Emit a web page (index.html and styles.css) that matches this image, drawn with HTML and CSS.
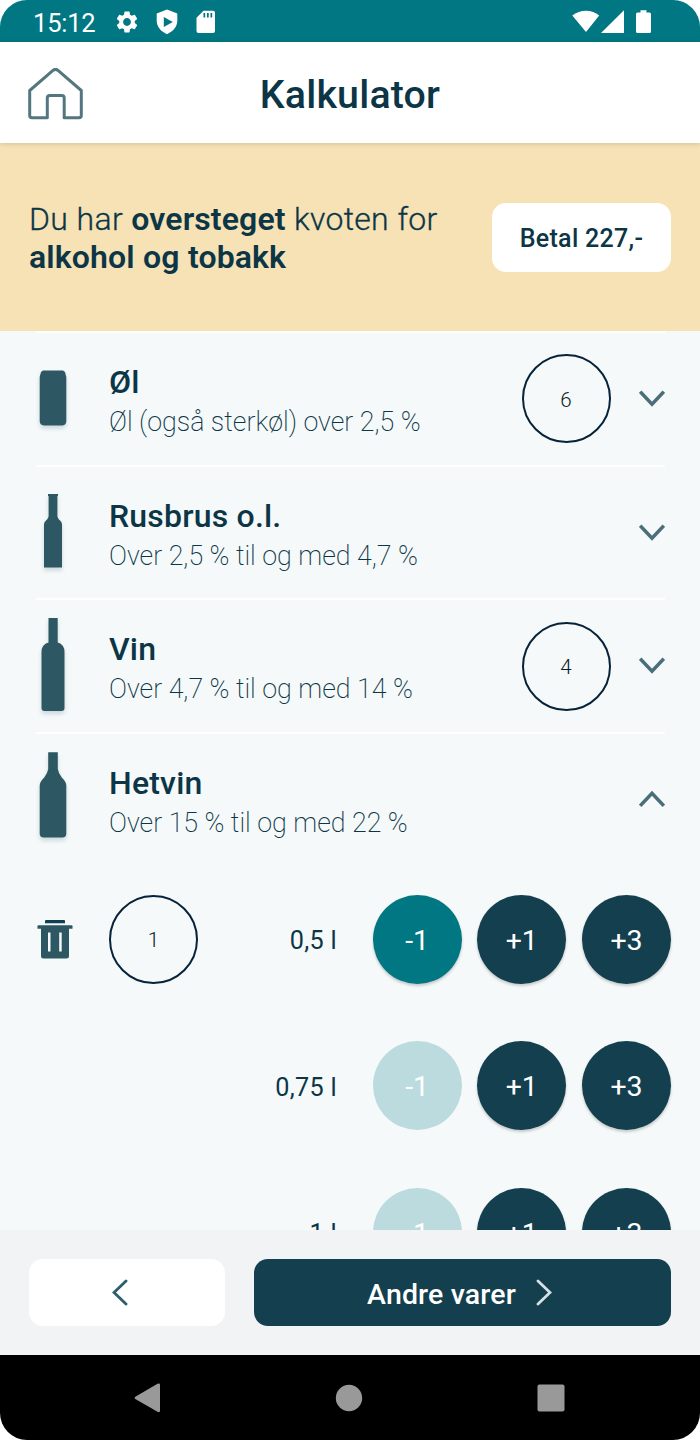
FILE: index.html
```html
<!DOCTYPE html>
<html lang="no">
<head>
    <meta charset="UTF-8">
    <meta name="viewport" content="width=device-width, initial-scale=1.0">
    <title>Kalkulator</title>
    <link rel="stylesheet" href="styles.css">
</head>
<body>
    <div class="phone">
        <div class="status-bar">
            <span class="time">15:12</span>
            <svg class="status-gear" width="26" height="26" viewBox="0 0 24 24"><path fill="#fff" d="M19.14 12.94c.04-.3.06-.61.06-.94 0-.32-.02-.64-.07-.94l2.03-1.58c.18-.14.23-.41.12-.61l-1.92-3.32c-.12-.22-.37-.29-.59-.22l-2.39.96c-.5-.38-1.03-.7-1.62-.94l-.36-2.54c-.04-.24-.24-.41-.48-.41h-3.84c-.24 0-.43.17-.47.41l-.36 2.54c-.59.24-1.13.57-1.62.94l-2.39-.96c-.22-.08-.47 0-.59.22L2.74 8.87c-.12.21-.08.47.12.61l2.03 1.58c-.05.3-.09.63-.09.94s.02.64.07.94l-2.03 1.58c-.18.14-.23.41-.12.61l1.92 3.32c.12.22.37.29.59.22l2.39-.96c.5.38 1.03.7 1.62.94l.36 2.54c.05.24.24.41.48.41h3.84c.24 0 .44-.17.47-.41l.36-2.54c.59-.24 1.13-.56 1.62-.94l2.39.96c.22.08.47 0 .59-.22l1.92-3.32c.12-.22.07-.47-.12-.61l-2.01-1.58zM12 15.6c-1.98 0-3.6-1.62-3.6-3.6s1.62-3.6 3.6-3.6 3.6 1.62 3.6 3.6-1.62 3.6-3.6 3.6z"/></svg>
            <svg class="status-shield" width="22" height="26" viewBox="0 0 22 26"><path fill="#fff" fill-rule="evenodd" d="M11 .5 21.3 4.6v7.2c0 6-4.4 10.9-10.3 13.4C5.100 22.700.7 17.800.7 11.800V4.600zM7.800 8v10l9-5z"/></svg>
            <svg class="status-card" width="20" height="24" viewBox="0 0 20 24"><path fill="#fff" fill-rule="evenodd" d="M7.500.8H17a2 2 0 0 1 2 2V21a2 2 0 0 1-2 2H2.500a2 2 0 0 1-2-2V7.800zM7.500 3v4.500h1.700V3zM11 3v4.500h1.700V3zM14.500 3v4.500h1.700V3z"/></svg>
            <div class="status-right">
                <svg width="28" height="24" viewBox="0 0 28 24"><path fill="#fff" d="M.3 5.600C8-.9 20-.9 27.200 5.600L14 22z"/></svg>
                <svg width="23" height="24" viewBox="0 0 23 24"><path fill="#fff" d="M23 .3V23H0z"/></svg>
                <svg class="battery" width="15" height="24" viewBox="0 0 15 24"><path fill="#fff" d="M4.500.2h6v2.300h3a1.500 1.500 0 0 1 1.500 1.500v17.500a1.500 1.500 0 0 1-1.500 1.500h-12A1.500 1.500 0 0 1 0 21.500V4a1.500 1.500 0 0 1 1.500-1.500h3z"/></svg>
            </div>
        </div>

        <div class="header">
            <svg class="home" width="55" height="52" viewBox="0 0 55 52"><path fill="none" stroke="#54777f" stroke-width="3" stroke-linejoin="round" d="M1.700 22.500 25.300 2.200q2.200-1.600 4.400 0L53.300 22.500V47.500q0 2.300-2.300 2.300H36.200V30q0-2.500-2.500-2.500H21.800q-2.500 0-2.500 2.500V49.800H4q-2.300 0-2.300-2.300z"/></svg>
            <h1>Kalkulator</h1>
        </div>

        <div class="banner">
            <p>Du har <b>oversteget</b> kvoten for<br><b>alkohol og tobakk</b></p>
            <button class="pay-btn">Betal 227,-</button>
        </div>

        <div class="list">
            <div class="item">
                <div class="item-icon can">
                    <svg width="28" height="56" viewBox="0 0 28 56"><path fill="#2d5762" d="M4 .5h20l2 1.500L27.300 7v44q0 4-4 4.500H5Q.7 55 .7 51V7L2 2z"/></svg>
                </div>
                <div class="item-text">
                    <h2>Øl</h2>
                    <p>Øl (også sterkøl) over 2,5 %</p>
                </div>
                <div class="count">6</div>
                <svg class="chevron" width="26" height="18" viewBox="0 0 26 18"><path d="M1.200 1.700 13 14.200 24.800 1.700"/></svg>
            </div>
            <div class="item">
                <div class="item-icon bottle">
                    <svg width="20" height="74" viewBox="0 0 20 74"><path fill="#2d5762" d="M5 0h10v2h-.600v20.500q.6 2.300 2.600 4 2 1.500 2 4V73.500H1V30.500q0-2.500 2-4 2-1.700 2.600-4V2H5z"/></svg>
                </div>
                <div class="item-text">
                    <h2>Rusbrus o.l.</h2>
                    <p>Over 2,5 % til og med 4,7 %</p>
                </div>
                <svg class="chevron" width="26" height="18" viewBox="0 0 26 18"><path d="M1.200 1.700 13 14.200 24.800 1.700"/></svg>
            </div>
            <div class="item">
                <div class="item-icon bottle">
                    <svg width="24" height="93" viewBox="0 0 24 93"><path fill="#2d5762" d="M7.500 0h9.200v24.500Q23.500 26.500 23.500 34v56q0 3-3 3h-17q-3 0-3-3V34q0-7.500 7-9.500z"/></svg>
                </div>
                <div class="item-text">
                    <h2>Vin</h2>
                    <p>Over 4,7 % til og med 14 %</p>
                </div>
                <div class="count">4</div>
                <svg class="chevron" width="26" height="18" viewBox="0 0 26 18"><path d="M1.200 1.700 13 14.200 24.800 1.700"/></svg>
            </div>
            <div class="item">
                <div class="item-icon fortified">
                    <svg width="28" height="86" viewBox="0 0 28 86"><path fill="#2d5762" d="M9.200.3h9.600V17q.7 4.500 4 8.500 4.500 4.500 4.500 8V81.500q0 4-4 4H4.700q-4 0-4-4v-48q0-3.500 4.500-8 3.300-4 4-8.500z"/></svg>
                </div>
                <div class="item-text">
                    <h2>Hetvin</h2>
                    <p>Over 15 % til og med 22 %</p>
                </div>
                <svg class="chevron" width="26" height="18" viewBox="0 0 26 18"><path d="M1.200 14.800 13 2.300 24.800 14.800"/></svg>
            </div>

            <div class="size-row">
                <svg class="trash" width="36" height="39" viewBox="0 0 36 39"><path fill="#2d5762" fill-rule="evenodd" d="M4 8h28v28q0 2.500-2.500 2.500h-23Q4 38.500 4 36zM11 12.500v19h2.500v-19zM22.200 12.500v19h2.500v-19z"/><path fill="#2d5762" d="M1.500 5.200h33q1 0 1 1V8.700H.5V6.200q0-1 1-1z"/><path fill="#123f4e" d="M9 0h18q1 0 1 1v2.300H8V1q0-1 1-1z"/></svg>
                <div class="count">1</div>
                <span class="size">0,5 l</span>
                <button class="round minus">-1</button>
                <button class="round">+1</button>
                <button class="round">+3</button>
            </div>
            <div class="size-row">
                <span class="size">0,75 l</span>
                <button class="round disabled">-1</button>
                <button class="round">+1</button>
                <button class="round">+3</button>
            </div>
            <div class="size-row">
                <span class="size">1 l</span>
                <button class="round disabled">-1</button>
                <button class="round">+1</button>
                <button class="round">+3</button>
            </div>
        </div>

        <div class="footer">
            <button class="back-btn">
                <svg width="16" height="27" viewBox="0 0 16 27"><path fill="none" stroke="#2d5f6c" stroke-width="2.900" stroke-linecap="round" d="M14 2 2 13.500 14 25"/></svg>
            </button>
            <button class="next-btn">
                <span>Andre varer</span>
                <svg width="16" height="27" viewBox="0 0 16 27"><path fill="none" stroke="#d8dfe2" stroke-width="2.800" stroke-linecap="round" d="M2 2 14 13.500 2 25"/></svg>
            </button>
        </div>

        <div class="nav-bar">
            <svg width="28" height="30" viewBox="0 0 28 30"><path fill="#999" d="M1.300 13.800 23.500.8q2.500-1 2.500 1v26q0 2-2.500 1L1.300 16q-1.300-1.100 0-2.200z"/></svg>
            <svg width="28" height="28" viewBox="0 0 28 28"><circle cx="14" cy="14" r="13.200" fill="#999"/></svg>
            <svg width="28" height="28" viewBox="0 0 28 28"><rect x=".5" y=".5" width="27" height="27" rx="2" fill="#999"/></svg>
        </div>
    </div>
</body>
</html>
```
FILE: styles.css
```css
* {
    box-sizing: border-box;
}
body {
    margin: 0;
    background-color: #fff;
    font-family: Roboto, "Liberation Sans", sans-serif;
    color: #0c3646;
}
h1, h2, p {
    margin: 0;
}
button {
    border: none;
    padding: 0;
    font-family: inherit;
    color: inherit;
}
svg {
    display: block;
    flex: none;
}
.phone {
    width: 700px;
    height: 1440px;
    display: flex;
    flex-direction: column;
    border-radius: 27px;
    overflow: hidden;
    background-color: #f5f9fa;
}
.status-bar {
    height: 42px;
    flex: none;
    display: flex;
    align-items: center;
    padding: 1px 49px 0 33px;
    background-color: #007782;
    color: #fff;
}
.time {
    width: 63px;
    padding-top: 2px;
    font-size: 25.500px;
    letter-spacing: -0.2px;
    white-space: nowrap;
}
.status-gear {
    margin-left: 18px;
}
.status-shield {
    margin-left: 16px;
}
.status-card {
    margin-left: 18px;
}
.status-right {
    margin-left: auto;
    display: flex;
    gap: 1px;
}
.battery {
    margin-left: 11px;
}
.header {
    height: 101px;
    flex: none;
    display: flex;
    align-items: center;
    padding: 2px 28px 0;
    background-color: #fff;
    box-shadow: 0 1px 5px rgba(0,0,0,0.15);
    z-index: 1;
}
.header h1 {
    flex: 1;
    margin-right: 55px;
    padding-top: 2px;
    text-align: center;
    font-size: 39.300px;
    font-weight: 500;
    letter-spacing: 0.2px;
}
.banner {
    height: 188px;
    flex: none;
    display: flex;
    justify-content: space-between;
    align-items: flex-start;
    padding: 57px 29px 0 29px;
    background-color: #f6e2b5;
}
.banner p {
    font-size: 32px;
    line-height: 38px;
    font-weight: 300;
    letter-spacing: 0.3px;
    word-spacing: 0.3px;
    white-space: nowrap;
    -webkit-text-stroke: 0.3px #0c3646;
}
.banner b {
    font-weight: 600;
    letter-spacing: 0.12px;
    -webkit-text-stroke: 0;
}
.pay-btn {
    width: 179px;
    height: 69px;
    margin-top: 3px;
    padding-top: 2px;
    border-radius: 14px;
    background-color: #fff;
    font-size: 25px;
    font-weight: 470;
    letter-spacing: 0.3px;
}
.list {
    height: 899px;
    flex: none;
    overflow: hidden;
}
.item {
    height: 133.700px;
    margin: 0 35.500px 0 36px;
    display: flex;
    align-items: center;
    border-top: 2px solid #fff;
}
.item-icon {
    width: 33px;
    display: flex;
    justify-content: center;
    filter: drop-shadow(0 3px 2px rgba(45,87,98,0.2));
}
.can {
    padding-bottom: 1px;
}
.bottle {
    padding-bottom: 4px;
}
.fortified {
    padding-bottom: 10px;
}
.item-text {
    flex: 1;
    margin-left: 40px;
    padding-top: 6px;
    white-space: nowrap;
}
.item-text h2 {
    font-size: 32px;
    line-height: 40px;
    font-weight: 500;
    letter-spacing: 0.2px;
}
.item-text p {
    font-size: 26.800px;
    line-height: 40px;
    font-weight: 220;
    letter-spacing: -0.02px;
}
.count {
    width: 89px;
    height: 89px;
    flex: none;
    display: flex;
    justify-content: center;
    align-items: center;
    padding-top: 2px;
    border: 2px solid #06233a;
    border-radius: 50%;
    font-size: 20.500px;
    font-weight: 350;
    color: #0a1a26;
}
.chevron {
    margin-left: 28px;
}
.chevron path {
    fill: none;
    stroke: #4a6f7a;
    stroke-width: 3.500px;
}
.size-row {
    height: 146.500px;
    display: flex;
    align-items: center;
    padding: 0 29px 0 37px;
}
.trash {
    margin-right: 36px;
}
.size {
    margin-left: auto;
    margin-right: 20px;
    padding-top: 3px;
    font-size: 25.200px;
    font-weight: 370;
    letter-spacing: 0.3px;
}
.round {
    width: 89px;
    height: 89px;
    flex: none;
    margin-left: 15.700px;
    padding-top: 2px;
    border-radius: 50%;
    background-color: #133f4e;
    color: #fff;
    font-size: 28.500px;
    box-shadow: 0 2px 3px rgba(0,0,0,0.2);
}
.minus {
    background-color: #007782;
}
.disabled {
    background-color: #bbdbde;
    box-shadow: none;
}
.footer {
    height: 125px;
    flex: none;
    display: flex;
    gap: 29px;
    padding: 29px 29px;
    background-color: #f1f3f5;
}
.back-btn, .next-btn {
    height: 67px;
    display: flex;
    justify-content: center;
    align-items: center;
    border-radius: 14px;
}
.back-btn {
    width: 196px;
    padding-right: 14px;
    background-color: #fff;
}
.next-btn {
    flex: 1;
    gap: 20px;
    padding-right: 6px;
    background-color: #133f4e;
    color: #fff;
    font-size: 28.500px;
    font-weight: 500;
}
.next-btn span {
    padding-top: 3px;
    letter-spacing: 0.15px;
}
.nav-bar {
    height: 85px;
    flex: none;
    display: flex;
    justify-content: space-between;
    align-items: center;
    padding: 0 135px 0 133.500px;
    background-color: #000;
}
```
